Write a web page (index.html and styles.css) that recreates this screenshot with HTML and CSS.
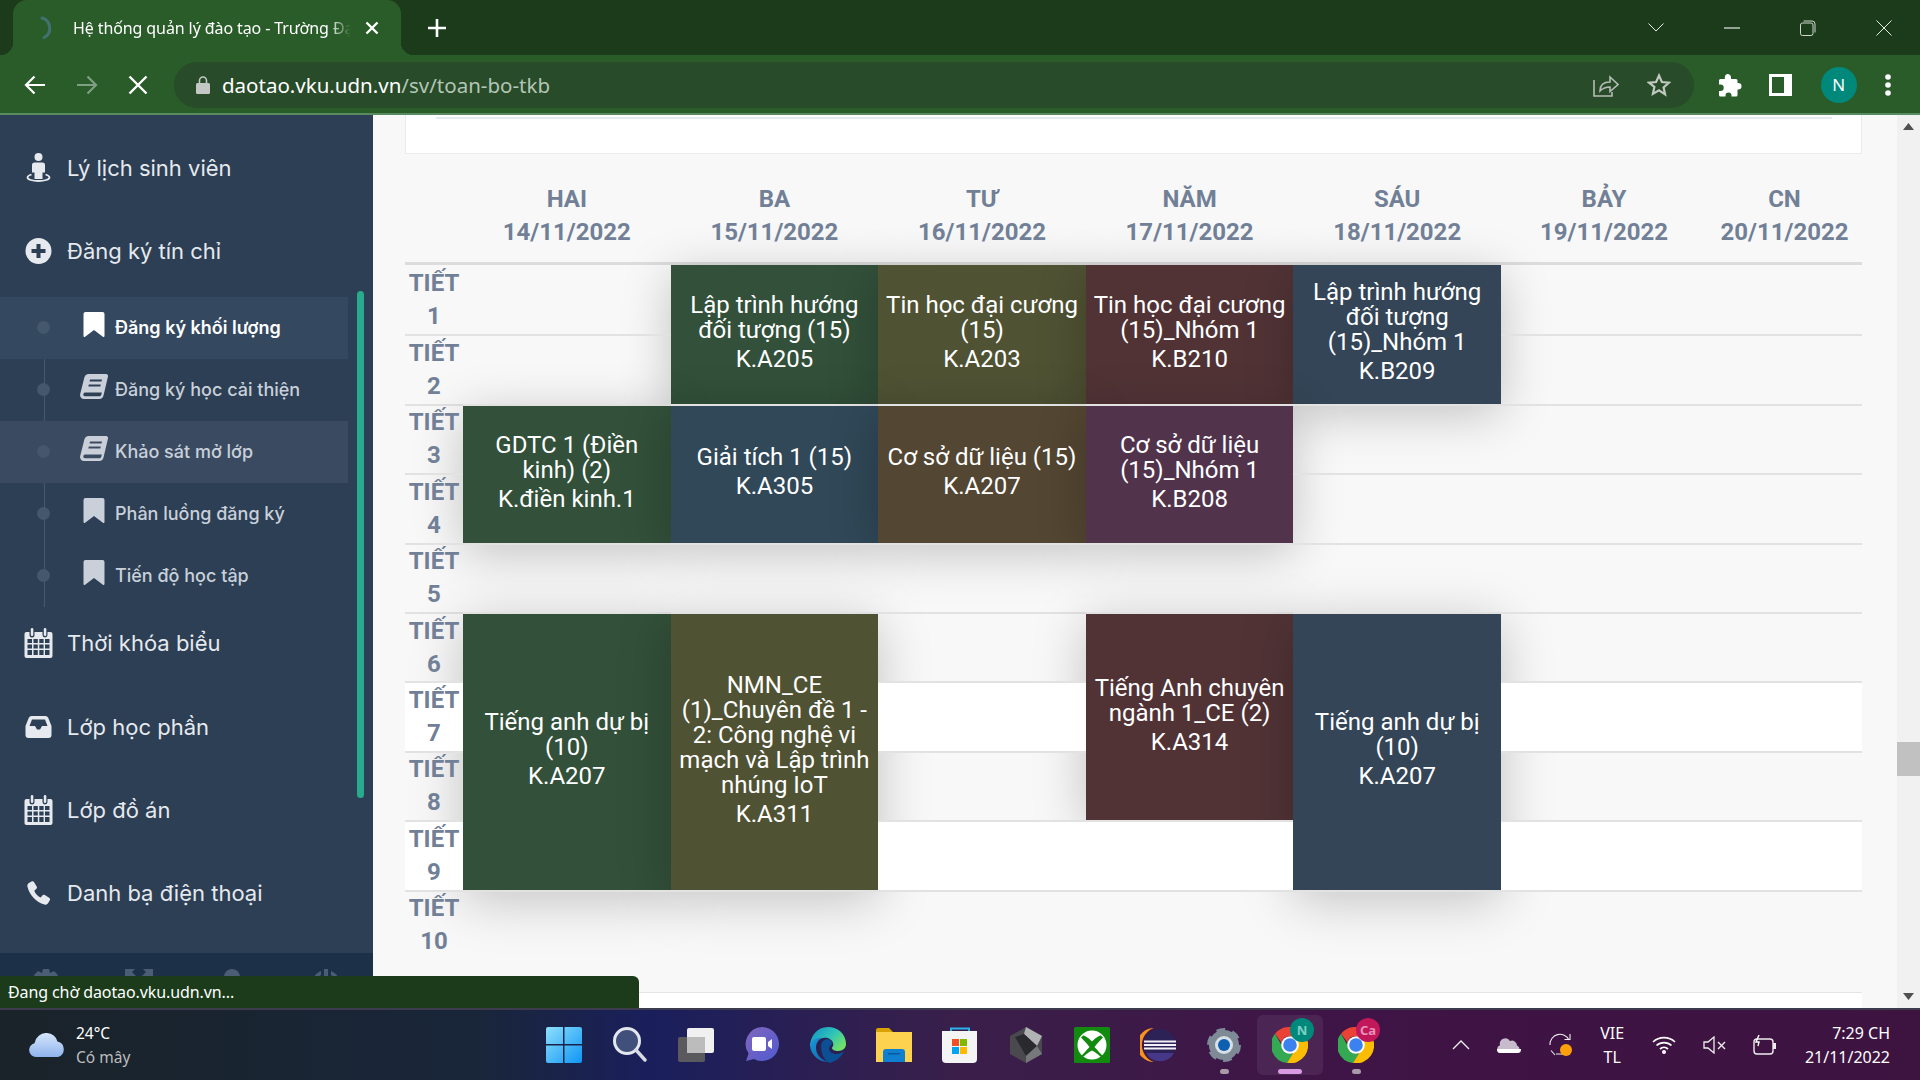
FILE: index.html
```html
<!DOCTYPE html>
<html lang="vi">
<head>
    <meta charset="UTF-8">
    <meta name="viewport" content="width=device-width, initial-scale=1.0">
    <title>Thời khóa biểu</title>
    <link rel="stylesheet" href="styles.css">
</head>
<body>
    <svg class="defs" width="0" height="0">
        <defs>
            <symbol id="i-bookmark" viewBox="0 0 21 25"><path d="M2 0h17a2 2 0 0 1 2 2v22a1 1 0 0 1-1.600.8L10.500 18l-8.900 6.800A1 1 0 0 1 0 24V2a2 2 0 0 1 2-2z"/></symbol>
            <symbol id="i-book" viewBox="0 0 28 25"><path fill-rule="evenodd" d="M8 0h18a2 2 0 0 1 2 2.500l-4.500 19A4.500 4.500 0 0 1 19 25H4a4 4 0 0 1-3.800-5L4.500 3A4 4 0 0 1 8 0zM10 5.500l-.5 2h12l.5-2zM8.800 10.500l-.5 2h12l.5-2zM5 18.500c-2 0-2.500 3.700 0 3.700h14.500c1 0 1.500-.7 1.800-1.500l.5-2.200z"/></symbol>
            <symbol id="i-calendar" viewBox="0 0 28 30"><path fill-rule="evenodd" d="M2 4h3v3a2.500 2.500 0 0 0 5 0V4h8v3a2.500 2.500 0 0 0 5 0V4h3a2 2 0 0 1 2 2v22a2 2 0 0 1-2 2H2a2 2 0 0 1-2-2V6a2 2 0 0 1 2-2zM3 11v4h4.500v-4zM9 11v4h4.300v-4zM14.800 11v4h4.300v-4zM20.500 11v4H25v-4zM3 16.500v4h4.500v-4zM9 16.500v4h4.300v-4zM14.800 16.500v4h4.300v-4zM20.500 16.500v4H25v-4zM3 22v5h4.500v-5zM9 22v5h4.300v-5zM14.800 22v5h4.300v-5zM20.500 22v5H25v-5z"/><rect x="6.300" y="0" width="2.500" height="8" rx="1.200"/><rect x="19.300" y="0" width="2.500" height="8" rx="1.200"/></symbol>
            <symbol id="i-chrome" viewBox="0 0 36 36">
                <path fill="#ea4335" d="M18 0a18 18 0 0 1 15.600 9H18a9 9 0 0 0-8.600 6.400L3 6.800A18 18 0 0 1 18 0z"/>
                <path fill="#34a853" d="M3 6.800l7.800 13.600A9 9 0 0 0 21.500 26.300L15 36A18 18 0 0 1 3 6.800z"/>
                <path fill="#fbbc04" d="M33.600 9A18 18 0 0 1 15 36l8.600-13.800A9 9 0 0 0 24 11.300L18 9z"/>
                <circle cx="18" cy="18" r="8.800" fill="#fff"/>
                <circle cx="18" cy="18" r="6.800" fill="#3b82f0"/>
            </symbol>
        </defs>
    </svg>

    <div class="tabstrip">
        <div class="tab">
            <svg class="spinner" width="22" height="24" viewBox="0 0 22 24"><path d="M5 2a10.500 10.500 0 0 1 2 19.500" fill="none" stroke="#3f7270" stroke-width="3" stroke-linecap="round"/></svg>
            <span class="tab-title">Hệ thống quản lý đào tạo - Trường Đại học</span>
            <svg width="14" height="14" viewBox="0 0 14 14"><path d="M1.500 1.500l11 11M12.500 1.500l-11 11" stroke="#fff" stroke-width="2.400"/></svg>
        </div>
        <svg class="new-tab" width="20" height="20" viewBox="0 0 20 20"><path d="M10 1v18M1 10h18" stroke="#fff" stroke-width="2.600"/></svg>
        <div class="win-controls">
            <svg width="16" height="9" viewBox="0 0 16 9"><path d="M.5.500L8 8 15.500.500" fill="none" stroke="#e6ece6" stroke-width="1"/></svg>
            <svg width="16" height="2" viewBox="0 0 16 2"><path d="M0 1h16" stroke="#e6ece6" stroke-width="1.200"/></svg>
            <svg width="16" height="16" viewBox="0 0 16 16"><rect x=".5" y="3" width="12.500" height="12.500" rx="2" fill="none" stroke="#cfd8cf"/><path d="M3.500 1h8.500a3 3 0 0 1 3 3v8.500" fill="none" stroke="#cfd8cf"/></svg>
            <svg width="16" height="16" viewBox="0 0 16 16"><path d="M.5.500l15 15M15.500.500l-15 15" stroke="#e6ece6" stroke-width="1"/></svg>
        </div>
    </div>

    <div class="toolbar">
        <svg class="nav-btn" width="22" height="20" viewBox="0 0 22 20"><path d="M21 10H2M10.500 1.500L2 10l8.500 8.500" fill="none" stroke="#fff" stroke-width="2.200"/></svg>
        <svg class="nav-btn" width="22" height="20" viewBox="0 0 22 20"><path d="M1 10h19M11.500 1.500L20 10l-8.500 8.500" fill="none" stroke="#7f9f84" stroke-width="2.200"/></svg>
        <svg class="nav-btn" width="20" height="20" viewBox="0 0 20 20"><path d="M1.500 1.500l17 17M18.500 1.500l-17 17" stroke="#fff" stroke-width="2.400"/></svg>
        <div class="omnibox">
            <svg width="14" height="18" viewBox="0 0 14 18"><path d="M3.500 7V4.500a3.500 3.500 0 0 1 7 0V7" fill="none" stroke="#c4c8c4" stroke-width="1.600"/><rect y="7" width="14" height="11" rx="1.500" fill="#c4c8c4"/></svg>
            <span class="url"><b>daotao.vku.udn.vn</b>/sv/toan-bo-tkb</span>
            <svg class="share" width="26" height="24" viewBox="0 0 26 24"><path d="M1 7v16h18v-4" fill="none" stroke="#b4bdb4" stroke-width="1.600"/><path d="M7 18c0-6 4-9 10-9V4l8 7.500-8 7V14c-4 0-7 1-10 4z" fill="none" stroke="#b4bdb4" stroke-width="1.600"/></svg>
            <svg width="24" height="24" viewBox="0 0 24 24"><path d="M12 2.500l2.900 6.500 7 .7-5.300 4.700 1.500 7L12 17.300l-6.100 3.600 1.500-7L2.100 9.700l7-.7z" fill="none" stroke="#c0c8c0" stroke-width="2.200"/></svg>
        </div>
        <div class="toolbar-right">
            <svg width="24" height="24" viewBox="0 0 24 24"><path d="M9 1a3.500 3.500 0 0 1 4 3.200V6h5a1.500 1.500 0 0 1 1.500 1.500V10h.8a3.200 3.200 0 0 1 0 6.400h-.8V22a1.500 1.500 0 0 1-1.500 1.500h-4.500v-1a3 3 0 0 0-6 0v1H2.500A1.500 1.500 0 0 1 1 22v-4h1.500a3.200 3.200 0 0 0 0-6.400H1V7.500A1.500 1.500 0 0 1 2.500 6h4.300V4.200A3.500 3.500 0 0 1 9 1z" fill="#fff"/></svg>
            <svg width="24" height="22" viewBox="0 0 24 22"><path fill="#fff" fill-rule="evenodd" d="M0 0h23v22H0zM3 3v16h12V3z"/></svg>
            <div class="avatar">N</div>
            <svg width="8" height="24" viewBox="0 0 8 24"><circle cx="4" cy="4" r="2.800" fill="#fff"/><circle cx="4" cy="12" r="2.800" fill="#fff"/><circle cx="4" cy="20" r="2.800" fill="#fff"/></svg>
        </div>
    </div>

    <div class="page">
        <aside class="sidebar">
            <div class="side-scroll"></div>
            <nav class="side-nav">
                <a class="nav-item">
                    <svg class="nav-icon" width="26" height="29" viewBox="0 0 24 29"><circle cx="12" cy="4" r="4"/><path d="M8 9.500h8a2.500 2.500 0 0 1 2.500 2.500v7.500h-2.500V26H8v-6.500H5.500V12A2.500 2.500 0 0 1 8 9.500z"/><path d="M5 21.500C2 22.500 1 23.500 1 24.500c0 2 5 3.500 11 3.500s11-1.500 11-3.500c0-1-1-2-4-3" fill="none" stroke="#e6e9ee" stroke-width="1.800"/></svg>
                    Lý lịch sinh viên
                </a>
                <a class="nav-item">
                    <svg class="nav-icon" width="26" height="26" viewBox="0 0 26 26"><path fill-rule="evenodd" d="M13 0a13 13 0 1 1 0 26a13 13 0 0 1 0-26zM11 6v5H6v4h5v5h4v-5h5v-4h-5V6z"/></svg>
                    Đăng ký tín chỉ
                </a>
                <div class="submenu">
                    <a class="sub-item sub-active"><svg class="sub-icon" width="21" height="25"><use href="#i-bookmark"/></svg>Đăng ký khối lượng</a>
                    <a class="sub-item"><svg class="sub-icon" width="28" height="25"><use href="#i-book"/></svg>Đăng ký học cải thiện</a>
                    <a class="sub-item sub-hover"><svg class="sub-icon" width="28" height="25"><use href="#i-book"/></svg>Khảo sát mở lớp</a>
                    <a class="sub-item"><svg class="sub-icon" width="21" height="25"><use href="#i-bookmark"/></svg>Phân luồng đăng ký</a>
                    <a class="sub-item"><svg class="sub-icon" width="21" height="25"><use href="#i-bookmark"/></svg>Tiến độ học tập</a>
                </div>
                <a class="nav-item">
                    <svg class="nav-icon" width="28" height="30"><use href="#i-calendar"/></svg>
                    Thời khóa biểu
                </a>
                <a class="nav-item">
                    <svg class="nav-icon" width="26" height="22" viewBox="0 0 26 22"><path fill-rule="evenodd" d="M6 0h14a3 3 0 0 1 2.700 1.700L26 10v9a3 3 0 0 1-3 3H3a3 3 0 0 1-3-3v-9l3.300-8.300A3 3 0 0 1 6 0zM6.500 3.500L4 10h5.500l2 3.500h3l2-3.500H22l-2.500-6.500z"/></svg>
                    Lớp học phần
                </a>
                <a class="nav-item">
                    <svg class="nav-icon" width="28" height="30"><use href="#i-calendar"/></svg>
                    Lớp đồ án
                </a>
                <a class="nav-item">
                    <svg class="nav-icon" width="24" height="24" viewBox="0 0 24 24"><path d="M5 .5c1-.6 2-.3 2.600.7l2.600 4.300c.5.900.3 1.900-.5 2.500L7.800 9.700c1 3 3.500 5.700 6.500 6.800l1.500-1.900c.6-.8 1.700-1 2.500-.5l4.300 2.600c1 .6 1.300 1.700.7 2.600l-1.600 2.600c-.8 1.300-2.300 2-3.800 1.700C9.700 21.300 2.700 14 .9 5.600.6 4.200 1.200 2.800 2.400 2z"/></svg>
                    Danh bạ điện thoại
                </a>
            </nav>
            <div class="side-footer">
                <svg width="28" height="28" viewBox="0 0 28 28"><path d="M11 0h6l1 4 4-2 4 4-2 4 4 1v6l-4 1 2 4-4 4-4-2-1 4h-6l-1-4-4 2-4-4 2-4-4-1v-6l4-1-2-4 4-4 4 2z"/></svg>
                <svg width="28" height="28" viewBox="0 0 28 28"><path d="M0 0h10L7 3l5 5-4 4-5-5-3 3zM28 0v10l-3-3-5 5-4-4 5-5-3-3z"/></svg>
                <svg width="28" height="28" viewBox="0 0 28 28"><circle cx="14" cy="8" r="8"/></svg>
                <svg width="30" height="28" viewBox="0 0 30 28"><path d="M13 0h4v14h-4zM10 2v4a10 10 0 1 0 10 0V2a14 14 0 1 1-10 0z"/></svg>
            </div>
        </aside>

        <main class="content">
            <div class="top-card"><div class="top-rule"></div></div>

            <table class="timetable">
                <colgroup>
                    <col class="col-tiet">
                    <col class="col-day"><col class="col-day"><col class="col-day"><col class="col-day"><col class="col-day">
                    <col class="col-sat">
                    <col class="col-sun">
                </colgroup>
                <thead>
                    <tr>
                        <th></th>
                        <th>HAI<br>14/11/2022</th>
                        <th>BA<br>15/11/2022</th>
                        <th>TƯ<br>16/11/2022</th>
                        <th>NĂM<br>17/11/2022</th>
                        <th>SÁU<br>18/11/2022</th>
                        <th>BẢY<br>19/11/2022</th>
                        <th>CN<br>20/11/2022</th>
                    </tr>
                </thead>
                <tbody>
                    <tr>
                        <td class="tiet">TIẾT<br>1</td>
                        <td></td>
                        <td class="ev ev-green" rowspan="2"><div class="ev-name">Lập trình hướng đối tượng (15)</div><div class="ev-room">K.A205</div></td>
                        <td class="ev ev-olive" rowspan="2"><div class="ev-name">Tin học đại cương (15)</div><div class="ev-room">K.A203</div></td>
                        <td class="ev ev-maroon" rowspan="2"><div class="ev-name">Tin học đại cương (15)_Nhóm 1</div><div class="ev-room">K.B210</div></td>
                        <td class="ev ev-navy" rowspan="2"><div class="ev-name">Lập trình hướng đối tượng (15)_Nhóm 1</div><div class="ev-room">K.B209</div></td>
                        <td></td>
                        <td></td>
                    </tr>
                    <tr>
                        <td class="tiet">TIẾT<br>2</td>
                        <td></td>
                        <td></td>
                        <td></td>
                    </tr>
                    <tr>
                        <td class="tiet">TIẾT<br>3</td>
                        <td class="ev ev-green" rowspan="2"><div class="ev-name">GDTC 1 (Điền kinh) (2)</div><div class="ev-room">K.điền kinh.1</div></td>
                        <td class="ev ev-slate" rowspan="2"><div class="ev-name">Giải tích 1 (15)</div><div class="ev-room">K.A305</div></td>
                        <td class="ev ev-brown" rowspan="2"><div class="ev-name">Cơ sở dữ liệu (15)</div><div class="ev-room">K.A207</div></td>
                        <td class="ev ev-plum" rowspan="2"><div class="ev-name">Cơ sở dữ liệu (15)_Nhóm 1</div><div class="ev-room">K.B208</div></td>
                        <td></td>
                        <td></td>
                        <td></td>
                    </tr>
                    <tr>
                        <td class="tiet">TIẾT<br>4</td>
                        <td></td>
                        <td></td>
                        <td></td>
                    </tr>
                    <tr>
                        <td class="tiet">TIẾT<br>5</td>
                        <td></td><td></td><td></td><td></td><td></td><td></td><td></td>
                    </tr>
                    <tr>
                        <td class="tiet">TIẾT<br>6</td>
                        <td class="ev ev-green" rowspan="4"><div class="ev-name">Tiếng anh dự bị (10)</div><div class="ev-room">K.A207</div></td>
                        <td class="ev ev-olive" rowspan="4"><div class="ev-name">NMN_CE (1)_Chuyên đề 1 - 2: Công nghệ vi mạch và Lập trình nhúng IoT</div><div class="ev-room">K.A311</div></td>
                        <td></td>
                        <td class="ev ev-maroon" rowspan="3"><div class="ev-name">Tiếng Anh chuyên ngành 1_CE (2)</div><div class="ev-room">K.A314</div></td>
                        <td class="ev ev-navy" rowspan="4"><div class="ev-name">Tiếng anh dự bị (10)</div><div class="ev-room">K.A207</div></td>
                        <td></td>
                        <td></td>
                    </tr>
                    <tr class="row-white">
                        <td class="tiet">TIẾT<br>7</td>
                        <td></td>
                        <td></td>
                        <td></td>
                    </tr>
                    <tr>
                        <td class="tiet">TIẾT<br>8</td>
                        <td></td>
                        <td></td>
                        <td></td>
                    </tr>
                    <tr class="row-white">
                        <td class="tiet">TIẾT<br>9</td>
                        <td></td>
                        <td></td>
                        <td></td>
                        <td></td>
                    </tr>
                    <tr>
                        <td class="tiet">TIẾT<br>10</td>
                        <td></td><td></td><td></td><td></td><td></td><td></td><td></td>
                    </tr>
                </tbody>
            </table>

            <div class="bottom-card"></div>
        </main>

        <div class="page-scroll">
            <svg class="scroll-arrow" width="23" height="23" viewBox="0 0 23 23"><path d="M11.500 8l5.500 7H6z" fill="#505050"/></svg>
            <div class="scroll-track"><div class="scroll-thumb"></div></div>
            <svg class="scroll-arrow" width="23" height="23" viewBox="0 0 23 23"><path d="M11.500 15L6 8h11z" fill="#505050"/></svg>
        </div>
    </div>

    <div class="status-bubble">Đang chờ daotao.vku.udn.vn...</div>

    <footer class="taskbar">
        <div class="weather">
            <svg width="36" height="24" viewBox="0 0 36 24"><defs><linearGradient id="cloud" x1="0" y1="0" x2="0" y2="1"><stop offset="0" stop-color="#d6e6fb"/><stop offset="1" stop-color="#8fb4ee"/></linearGradient></defs><path d="M7 24a7 7 0 0 1-1.500-13.800A12 12 0 0 1 18 0a11 11 0 0 1 10.500 8.500A8 8 0 0 1 29 24z" fill="url(#cloud)"/></svg>
            <div class="weather-text">
                <div>24°C</div>
                <div class="weather-sub">Có mây</div>
            </div>
        </div>

        <div class="task-icons">
            <div class="task-icon">
                <svg width="36" height="36" viewBox="0 0 36 36"><defs><linearGradient id="win" x1="0" y1="0" x2="1" y2="1"><stop offset="0" stop-color="#8de0fb"/><stop offset="1" stop-color="#0f95f5"/></linearGradient></defs><path fill="url(#win)" d="M2 0h15v17H0V2a2 2 0 0 1 2-2zM18.500 0H34a2 2 0 0 1 2 2v15H18.500zM0 18.500h17V36H2a2 2 0 0 1-2-2zM18.500 18.500H36V34a2 2 0 0 1-2 2H18.500z"/></svg>
            </div>
            <div class="task-icon">
                <svg width="34" height="36" viewBox="0 0 34 36"><circle cx="14" cy="14" r="12.500" fill="#41507a" stroke="#e4e8ee" stroke-width="3"/><path d="M23 23l9 10" stroke="#d8dce2" stroke-width="3.400" stroke-linecap="round"/></svg>
            </div>
            <div class="task-icon">
                <svg width="36" height="34" viewBox="0 0 36 34"><rect x="0" y="9" width="27" height="25" rx="2" fill="#5a5a5e"/><rect x="9" y="0" width="27" height="25" rx="2" fill="#f0f0f0"/><rect x="9" y="9" width="18" height="16" fill="#bcbcbc"/></svg>
            </div>
            <div class="task-icon">
                <svg width="34" height="36" viewBox="0 0 34 36"><defs><linearGradient id="chat" x1="0" y1="0" x2="1" y2="1"><stop offset="0" stop-color="#8266bd"/><stop offset="1" stop-color="#4f5bd0"/></linearGradient></defs><path fill="url(#chat)" d="M17 0a17 17 0 1 1-8 32l-8 2 2.600-7.500A17 17 0 0 1 17 0z"/><rect x="7" y="10" width="14" height="14" rx="2" fill="#fff"/><path d="M23 15l4-3v10l-4-3z" fill="#fff"/></svg>
            </div>
            <div class="task-icon">
                <svg width="36" height="36" viewBox="0 0 36 36"><defs><linearGradient id="edge1" x1="0" y1="0" x2="1" y2=".6"><stop offset="0" stop-color="#0f8fc8"/><stop offset=".6" stop-color="#2fc4b8"/><stop offset="1" stop-color="#6fe06a"/></linearGradient><linearGradient id="edge2" x1="0" y1="0" x2="1" y2="1"><stop offset="0" stop-color="#1a9ad8"/><stop offset="1" stop-color="#0d5ea8"/></linearGradient></defs><path fill="url(#edge1)" d="M18 0c10 0 18 7 18 17 0 4-3 7-8 7-3 0-6-1-6-3 0-1 2-2 1-5-1-4-6-6-10-5C7 12 3 15 0 20 0 9 7 0 18 0z"/><path fill="url(#edge2)" d="M0 18c2-5 7-8 12-7-4 2-6 5-6 10 0 7 6 13 14 14a18 18 0 0 1-20-17z"/><path fill="#0b4f94" d="M11 19c0-5 4-7 7-7 3 1 4 3 4 5-1 1-3 2-3 5 0 3 4 5 8 5 2 0 5-1 7-3-2 5-7 10-14 12-5-1-9-9-9-17z"/></svg>
            </div>
            <div class="task-icon">
                <svg width="36" height="34" viewBox="0 0 36 34"><path fill="#d8a200" d="M2 0h11l4 4h19v8H0V2a2 2 0 0 1 2-2z"/><path fill="#fdd24f" d="M0 4h36v30H0z"/><path fill="#0f7fd0" d="M7 24a3 3 0 0 1 3-3h16a3 3 0 0 1 3 3v10H7z"/><rect x="12" y="25" width="12" height="1.500" fill="#0a5aa0"/></svg>
            </div>
            <div class="task-icon">
                <svg width="36" height="36" viewBox="0 0 36 36"><path d="M9 5V1.500h18V5" fill="none" stroke="#2ab3ea" stroke-width="2"/><path fill="#f4f4f4" d="M0 4h35v28a4 4 0 0 1-4 4H4a4 4 0 0 1-4-4z"/><rect x="10" y="12" width="7" height="7" fill="#f25022"/><rect x="18" y="12" width="7" height="7" fill="#7fba00"/><rect x="10" y="20" width="7" height="7" fill="#00a4ef"/><rect x="18" y="20" width="7" height="7" fill="#ffb900"/></svg>
            </div>
            <div class="task-icon">
                <svg width="32" height="36" viewBox="0 0 32 36"><path fill="#4a4a4e" d="M16 0l16 9v18l-16 9-16-9V9z"/><path fill="#b0b2b4" d="M16 0l16 9-5 10L14 7z"/><path fill="#2a2a2e" d="M5 10l9-3 13 12-11 10z"/><path fill="#77787c" d="M16 29l11-10 5 8-16 9z"/></svg>
            </div>
            <div class="task-icon">
                <svg width="36" height="36" viewBox="0 0 36 36"><rect width="36" height="36" rx="1.500" fill="#118a0e"/><circle cx="18" cy="18" r="14.500" fill="#fff"/><path fill="#118a0e" d="M18 14.500C14.500 11 11 8.500 9 8.500L7 10.500c3 3 7 7 8.500 9.500C12 24 7 29 6.500 30l1 1.500c2-2 7-6.500 10.500-8 3.500 1.500 8.500 6 10.500 8l1-1.500c-.5-1-5.500-6-9-10C22 17.500 26 13.500 29 10.500l-2-2c-2 0-5.500 2.500-9 6z"/></svg>
            </div>
            <div class="task-icon">
                <svg width="36" height="34" viewBox="0 0 36 34"><path d="M14 0A17 17 0 0 0 14 34 18 18 0 0 1 14 0z" fill="#f7941e"/><circle cx="20" cy="17" r="16" fill="#2c2255"/><path d="M4 13.500h32M4 17h32M4 20.500h32" stroke="#f2f0f8" stroke-width="2"/><path d="M6 25a16 16 0 0 0 28 0z" fill="#473788"/></svg>
            </div>
            <div class="task-icon task-dot">
                <svg width="36" height="34" viewBox="0 0 36 34"><path d="M18 6a11 11 0 1 0 .01 0z" fill="none" stroke="#7e8b96" stroke-width="8"/><circle cx="18" cy="17" r="14" fill="none" stroke="#7e8b96" stroke-width="6" stroke-dasharray="8 6.660"/><circle cx="18" cy="17" r="9" fill="#d8dfe6"/><circle cx="18" cy="17" r="6" fill="#0d5fb0"/></svg>
            </div>
            <div class="task-icon task-active task-dot">
                <svg class="chrome-icon" width="36" height="36"><use href="#i-chrome"/></svg>
                <span class="badge badge-n">N</span>
            </div>
            <div class="task-icon task-dot">
                <svg class="chrome-icon" width="36" height="36"><use href="#i-chrome"/></svg>
                <span class="badge badge-ca">Ca</span>
            </div>
        </div>

        <div class="tray">
            <svg width="18" height="10" viewBox="0 0 18 10"><path d="M1 9l8-8 8 8" fill="none" stroke="#eee" stroke-width="1.300"/></svg>
            <svg width="24" height="16" viewBox="0 0 24 16"><path d="M4 16a4 4 0 0 1-1-7.800A5.500 5.500 0 0 1 13 4a5 5 0 0 1 7 4.500A4 4 0 0 1 20 16z" fill="#c7bccb"/><path d="M0 12h24v.5a3.500 3.500 0 0 1-3.500 3.500h-17A3.500 3.500 0 0 1 0 12.500z" fill="#fff"/></svg>
            <svg width="24" height="24" viewBox="0 0 24 24"><path d="M1 12a10 10 0 0 1 19-5M21 1v5.500h-5.500M17 21H7M2 17.500L6 22" fill="none" stroke="#eee" stroke-width="1.100"/><circle cx="17" cy="17" r="6" fill="#ff9f0a"/></svg>
            <div class="lang">VIE<br>TL</div>
            <svg width="24" height="18" viewBox="0 0 24 18"><path d="M1 6a16 16 0 0 1 22 0M4.500 9.500a11 11 0 0 1 15 0M8 13a6 6 0 0 1 8 0" fill="none" stroke="#fff" stroke-width="1.700"/><circle cx="12" cy="16" r="2" fill="#fff"/></svg>
            <svg width="23" height="18" viewBox="0 0 23 18"><path d="M1 6h4l6-5v16l-6-5H1z" fill="none" stroke="#eee" stroke-width="1.300"/><path d="M15 6l7 7M22 6l-7 7" stroke="#eee" stroke-width="1.400"/></svg>
            <svg width="24" height="20" viewBox="0 0 24 20"><rect x="1" y="4" width="19" height="15" rx="3" fill="none" stroke="#eee" stroke-width="1.400"/><rect x="20" y="8" width="3" height="6" fill="#eee"/><path d="M6 0L3 7h3l-1 4" fill="none" stroke="#fff" stroke-width="1.400"/></svg>
            <div class="clock">7:29 CH<br>21/11/2022</div>
        </div>
    </footer>
</body>
</html>
```

FILE: styles.css
```css
*{
    box-sizing: border-box;
}
html, body{
    margin: 0;
    height: 100%;
}
body{
    width: 1920px;
    height: 1080px;
    overflow: hidden;
    display: flex;
    flex-direction: column;
    position: relative;
    font-family: "Noto Sans", sans-serif;
    background-color: #f8f8f8;
}
.defs{
    position: absolute;
}

/* browser top */
.tabstrip{
    height: 55px;
    flex: none;
    background-color: #1b3b1b;
    display: flex;
    align-items: center;
}
.tab{
    width: 388px;
    height: 55px;
    margin-left: 13px;
    padding: 0 22px 0 24px;
    position: relative;
    display: flex;
    align-items: center;
    gap: 14px;
    background-color: #2a5c2a;
    border-radius: 14px 14px 0 0;
}
.tab::before, .tab::after{
    content: "";
    position: absolute;
    bottom: 0;
    width: 13px;
    height: 13px;
}
.tab::before{
    left: -13px;
    background: radial-gradient(circle at 0 0, transparent 13px, #2a5c2a 13.500px);
}
.tab::after{
    right: -13px;
    background: radial-gradient(circle at 100% 0, transparent 13px, #2a5c2a 13.500px);
}
.spinner{
    flex: none;
}
.tab-title{
    flex: 1;
    font-size: 16px;
    letter-spacing: -.1px;
    color: #fff;
    white-space: nowrap;
    overflow: hidden;
    -webkit-mask-image: linear-gradient(90deg, #000 92%, transparent);
    mask-image: linear-gradient(90deg, #000 92%, transparent);
}
.tab > svg:last-child{
    flex: none;
}
.new-tab{
    margin-left: 26px;
}
.win-controls{
    margin-left: auto;
    width: 292px;
    padding: 0 28px 0 20px;
    display: flex;
    align-items: center;
    justify-content: space-between;
}
.toolbar{
    height: 60px;
    flex: none;
    padding: 7px 0 5px 24px;
    display: flex;
    align-items: center;
    background-color: #2a5c2a;
    border-bottom: 2px solid #5a8a5f;
}
.nav-btn{
    margin-right: 30px;
}
.nav-btn:nth-child(3){
    margin-right: 26px;
}
.omnibox{
    width: 1520px;
    height: 46px;
    padding: 0 23px 0 22px;
    display: flex;
    align-items: center;
    background-color: #284b29;
    border-radius: 23px;
}
.url{
    margin-left: 12px;
    font-size: 20.500px;
    color: #b3c6b5;
    white-space: nowrap;
}
.url b{
    font-weight: 400;
    color: #fff;
}
.share{
    margin-left: auto;
    margin-right: 28px;
}
.toolbar-right{
    flex: 1;
    padding: 0 28px 0 24px;
    display: flex;
    align-items: center;
    justify-content: space-between;
}
.avatar{
    width: 36px;
    height: 36px;
    border-radius: 50%;
    background-color: #00897b;
    color: #fff;
    font-size: 17px;
    line-height: 36px;
    text-align: center;
}

/* page */
.page{
    height: 893px;
    flex: none;
    display: flex;
    overflow: hidden;
}
.sidebar{
    width: 373px;
    flex: none;
    position: relative;
    display: flex;
    flex-direction: column;
    background-color: #2c3f54;
    font-family: Inter, sans-serif;
}
.side-scroll{
    position: absolute;
    left: 357px;
    top: 176px;
    width: 7px;
    height: 507px;
    border-radius: 4px;
    background-color: #27ab8c;
}
.side-nav{
    flex: 1;
    padding-top: 11px;
}
.nav-item{
    height: 83.300px;
    padding-left: 24px;
    display: flex;
    align-items: center;
    font-size: 22px;
    color: #e6e9ee;
}
.nav-icon{
    width: 43px;
    flex: none;
    fill: #e6e9ee;
    padding-right: 14px;
}
.submenu{
    position: relative;
    width: 348px;
    margin: 4px 0 -5px;
}
.submenu::before{
    content: "";
    position: absolute;
    left: 44px;
    top: 0;
    bottom: 0;
    width: 1px;
    background-color: #46586d;
}
.sub-item{
    height: 62px;
    padding-left: 73px;
    position: relative;
    display: flex;
    align-items: center;
    font-size: 18px;
    font-weight: 500;
    color: #c9d0da;
    fill: #c9d0da;
}
.sub-item::before{
    content: "";
    position: absolute;
    left: 37px;
    top: 24px;
    width: 13px;
    height: 13px;
    border-radius: 50%;
    background-color: #44576c;
}
.sub-icon{
    width: 42px;
    flex: none;
    margin-top: -6px;
}
.sub-active{
    background-color: #34495f;
    color: #fff;
    fill: #fff;
    font-weight: 600;
}
.sub-hover{
    background-color: #3a4b61;
}
.side-footer{
    height: 55px;
    flex: none;
    padding: 16px 32px 0;
    display: flex;
    justify-content: space-between;
    background-color: #1c3048;
    fill: #4a5d75;
}

/* main content */
.content{
    flex: 1;
    padding: 0 35px 0 32px;
    display: flex;
    flex-direction: column;
    font-family: Roboto, sans-serif;
    background-color: #f8f8f8;
}
.top-card{
    height: 39px;
    flex: none;
    padding: 2px 29px 0 30px;
    background-color: #fff;
    border: 1px solid #e9ecef;
    border-top: 0;
}
.top-rule{
    height: 2px;
    background-color: #e6e9ef;
}
.timetable{
    width: 1457px;
    table-layout: fixed;
    border-collapse: separate;
    border-spacing: 0;
    color: #718096;
}
.col-tiet{
    width: 58px;
}
.col-day{
    width: 207.600px;
}
.col-sat{
    width: 206px;
}
.col-sun{
    width: 155px;
}
.timetable th{
    height: 111px;
    padding: 29px 0 13px;
    font-size: 24px;
    line-height: 33px;
    font-weight: 700;
    text-align: center;
    vertical-align: bottom;
    border-bottom: 3px solid #dcdcdc;
}
.timetable td{
    height: 69.400px;
    padding: 0;
    border-top: 2px solid #e2e2e2;
}
.timetable tbody tr:first-child td{
    border-top: 0;
}
.timetable .tiet{
    font-size: 24px;
    line-height: 33px;
    font-weight: 700;
    text-align: center;
}
.row-white td{
    position: relative;
    background-color: #fff;
}
.timetable .ev{
    padding: 0 4px;
    color: #fff;
    font-size: 24px;
    text-align: center;
    vertical-align: middle;
    background-clip: padding-box;
    box-shadow: 0 10px 50px rgba(0, 0, 0, .22);
}
.ev-name{
    line-height: 25px;
}
.ev-room{
    line-height: 33px;
}
.ev-green{
    background-color: #32503a;
}
.ev-olive{
    background-color: #4f5233;
}
.ev-maroon{
    background-color: #513336;
}
.ev-navy{
    background-color: #334556;
}
.ev-slate{
    background-color: #304858;
}
.ev-brown{
    background-color: #534632;
}
.ev-plum{
    background-color: #51344c;
}
.bottom-card{
    height: 16px;
    margin-top: auto;
    flex: none;
    background-color: #fff;
    border-top: 1px solid #e5e5e5;
}
.page-scroll{
    width: 23px;
    flex: none;
    display: flex;
    flex-direction: column;
    background-color: #f1f1f1;
}
.scroll-arrow{
    flex: none;
}
.scroll-track{
    flex: 1;
    padding-top: 604px;
}
.scroll-thumb{
    height: 34px;
    background-color: #c1c1c1;
}

/* chrome status bubble sits on top of the page */
.status-bubble{
    position: absolute;
    left: 0;
    top: 976px;
    width: 639px;
    height: 32px;
    padding: 0 8px;
    background-color: #1b3b1b;
    border-radius: 0 6px 0 0;
    color: #fff;
    font-size: 16px;
    line-height: 33px;
    letter-spacing: -.1px;
}

/* windows taskbar */
.taskbar{
    height: 72px;
    flex: none;
    position: relative;
    display: flex;
    align-items: center;
    color: #fff;
    background: linear-gradient(90deg, #1a2329 0, #19263a 25%, #1a1f5c 34%, #3a1f4a 50%, #3f1446 70%, #3d1340 100%);
    border-top: 2px solid #3c3c4e;
}
.weather{
    width: 531px;
    flex: none;
    padding-left: 29px;
    display: flex;
    align-items: center;
    gap: 11px;
    font-size: 15.500px;
    line-height: 24px;
}
.weather-sub{
    color: #bdbdbd;
}
.task-icons{
    display: flex;
}
.task-icon{
    width: 66px;
    height: 60px;
    position: relative;
    display: flex;
    align-items: center;
    justify-content: center;
}
.task-active{
    background-color: rgba(255, 255, 255, .07);
    border-radius: 6px;
}
.task-dot::after{
    content: "";
    position: absolute;
    left: 50%;
    bottom: 1px;
    width: 9px;
    height: 5px;
    margin-left: -4px;
    border-radius: 3px;
    background-color: #a89aa8;
}
.task-active::after{
    width: 24px;
    margin-left: -12px;
    background-color: #d89ae0;
}
.badge{
    position: absolute;
    left: 33px;
    top: 3px;
    width: 24px;
    height: 24px;
    border-radius: 50%;
    font-size: 13px;
    font-weight: 700;
    line-height: 24px;
    text-align: center;
}
.badge-n{
    background-color: #00897b;
    color: #7fd0c4;
}
.badge-ca{
    background-color: #c2185b;
    color: #e892b8;
}
.tray{
    flex: 1;
    padding: 0 30px 0 63px;
    display: flex;
    align-items: center;
    justify-content: space-between;
    font-size: 16px;
}
.lang{
    line-height: 24px;
    text-align: center;
}
.clock{
    line-height: 24px;
    text-align: right;
    white-space: nowrap;
}
```
